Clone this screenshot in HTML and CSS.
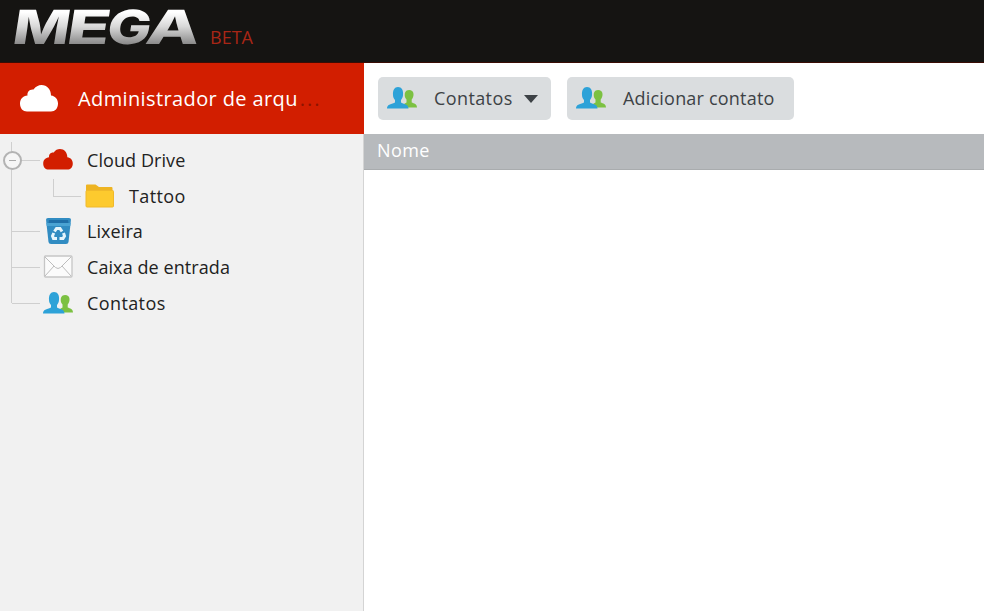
FILE: index.html
```
<!DOCTYPE html>
<html lang="pt">
<head>
    <meta charset="UTF-8">
    <title>MEGA</title>
    <link rel="stylesheet" href="styles.css">
</head>
<body>

<!-- shared icons -->
<svg class="defs" width="0" height="0">
    <symbol id="cloud" viewBox="0 0 38 27">
        <path d="M7 26.500C3 26.500 0 23.500 0 18.500C0 14 3 11 7.500 10.500C7 7 9.500 4 13.500 4.500C15.500 1.500 18.500 0 21.500 0C27 0 31 4.500 31 10.500C35.500 11 38 14.500 38 18.500C38 23.500 35 26.500 31 26.500Z"/>
    </symbol>
    <symbol id="people" viewBox="0 0 30 22">
        <path fill="#7cc142" d="M17 20.500V17L19.500 15.500V12.500C18 11 17.500 9 17.800 6.500C18.200 4 20 3 22.200 3C24.500 3 26.200 4.200 26.500 6.800C26.700 9 26 11 24.700 12.500V15.500C27 16.500 30 16.500 30 20.500Z"/>
        <path fill="#2da2d8" d="M0 21.500C0 17.500 3.500 17.500 8 15.500V13C6.500 11.500 6 9.500 6 8C5.700 3 7.500 0 11 0C14.700 0 16.500 3 16 8C16 9.500 15.300 11.500 14 13V15.500C18 17.500 21.500 17.500 21.500 21.500Z"/>
    </symbol>
</svg>

<header id="top">
    <svg class="logo" width="190" height="50">
        <defs>
            <linearGradient id="silver" x1="0" y1="0" x2="0" y2="1">
                <stop offset="0.25" stop-color="#ffffff"/>
                <stop offset="0.5" stop-color="#d8d8d8"/>
                <stop offset="0.8" stop-color="#8c8c8c"/>
            </linearGradient>
        </defs>
        <text transform="translate(0 44) skewX(-9)" fill="url(#silver)">
            <tspan x="-3" textLength="57" lengthAdjust="spacingAndGlyphs">M</tspan><tspan x="51" textLength="43" lengthAdjust="spacingAndGlyphs">E</tspan><tspan x="91" textLength="44" lengthAdjust="spacingAndGlyphs">G</tspan><tspan x="130" textLength="54" lengthAdjust="spacingAndGlyphs">A</tspan>
        </text>
    </svg>
    <span class="beta">BETA</span>
</header>

<div id="main">
    <aside id="left">
        <div class="title">
            <svg width="38" height="27" fill="#fff"><use href="#cloud"/></svg>
            <h1>Administrador de arqu<span>...</span></h1>
        </div>
        <ul class="tree">
            <li class="root">
                <i class="toggle"></i>
                <svg class="icon" width="30" height="21" fill="#d21e00"><use href="#cloud"/></svg>
                <span>Cloud Drive</span>
            </li>
            <li class="sub">
                <svg class="icon" width="30" height="24" viewBox="0 0 30 24">
                    <path fill="#eeb422" d="M1 7V1.500Q1 .5 2 .5H10.500L14 3H26.500Q27.500 3 27.500 4V7Z"/>
                    <rect x="1" y="6.500" width="27.500" height="16.500" rx="1" fill="#fdca2e" stroke="#f0b92b"/>
                </svg>
                <span class="wide">Tattoo</span>
            </li>
            <li class="branch">
                <svg class="icon" width="30" height="26" viewBox="0 0 30 26">
                    <path fill="#318cc2" d="M3 1.500Q3 0 5 0H26Q28 0 28 1.500L25.500 24Q25.200 26 23 26H8Q5.800 26 5.500 24Z"/>
                    <path fill="#1f6fa8" d="M6 2H25L25.500 5H5.500Z"/>
                    <path fill="#4aa3d3" d="M3.300 5H27.700L27.300 8H3.700Z"/>
                    <g fill="none" stroke="#e6f5fc" stroke-width="3">
                        <path d="M11.500 13.500L13.500 10.500H17L19 13.500"/>
                        <path d="M20.500 15L21.500 18L20 20.500H16.500"/>
                        <path d="M14 20.500H10.500L9.500 18L10.800 15"/>
                    </g>
                </svg>
                <span>Lixeira</span>
            </li>
            <li class="branch">
                <svg class="icon" width="30" height="23" viewBox="0 0 30 23">
                    <rect x="1.500" y="1" width="27.500" height="21" rx="1" fill="#fbfbfb" stroke="#c6c6c6" stroke-width="1.300"/>
                    <path fill="none" stroke="#bdbdbd" d="M2 2L12.500 12.500Q15 14.500 17.500 12.500L28 2M2 21L11 11M28 21L19 11"/>
                </svg>
                <span>Caixa de entrada</span>
            </li>
            <li class="branch last">
                <svg class="icon" width="30" height="22"><use href="#people"/></svg>
                <span class="wide">Contatos</span>
            </li>
        </ul>
    </aside>

    <section id="right">
        <div class="toolbar">
            <button class="contacts">
                <svg width="30" height="22"><use href="#people"/></svg>
                <span class="wide">Contatos</span>
                <svg class="arrow" width="14" height="8" viewBox="0 0 14 8"><path fill="#3d4246" d="M0 0H14L7 8Z"/></svg>
            </button>
            <button class="add">
                <svg width="30" height="22"><use href="#people"/></svg>
                <span>Adicionar contato</span>
            </button>
        </div>
        <div class="columns">Nome</div>
    </section>
</div>

</body>
</html>
```

FILE: styles.css
```
* {
    box-sizing: border-box;
}

body {
    margin: 0;
    height: 611px;
    display: flex;
    flex-direction: column;
    overflow: hidden;
    background-color: #fff;
    font-family: "Open Sans", sans-serif;
    font-size: 18px;
    color: #222;
}

svg {
    display: block;
    flex: none;
}

.defs {
    position: absolute;
}

#top {
    height: 63px;
    flex: none;
    display: flex;
    padding-left: 14px;
    background-color: #151412;
    border-bottom: 1px solid #3a0c04;
}

.logo {
    overflow: visible;
}

.logo text {
    font-family: Inter, sans-serif;
    font-weight: 800;
    font-size: 47px;
}

.beta {
    margin: 25px 0 0 6px;
    font-size: 18px;
    font-weight: 500;
    line-height: 25px;
    color: #a82616;
}

#main {
    flex: 1;
    display: flex;
}

#left {
    width: 364px;
    flex: none;
    background-color: #f1f1f1;
    border-right: 1px solid #d4d4d4;
}

.title {
    height: 71px;
    margin-right: -1px;
    padding-left: 20px;
    display: flex;
    align-items: center;
    gap: 20px;
    background-color: #d21e00;
    color: #fff;
}

.title h1 {
    margin: 0;
    padding-bottom: 1px;
    font-size: 20px;
    font-weight: normal;
    letter-spacing: 0.38px;
    white-space: nowrap;
}

.title h1 span {
    margin-left: 2px;
    color: #8c1400;
    letter-spacing: 2px;
}

.tree {
    list-style: none;
    margin: 0;
    padding: 8px 0 0;
}

.tree li {
    position: relative;
    height: 35.700px;
    padding-left: 43px;
    display: flex;
    align-items: center;
    gap: 14px;
    letter-spacing: 0.08px;
}

.tree .sub {
    padding-left: 85px;
}

.wide {
    letter-spacing: 0.4px;
}

/* connector lines */
.tree li::before {
    content: "";
    position: absolute;
    left: 11px;
    top: 0;
    height: 100%;
    border-left: 1px solid #cfcfcf;
}

.tree .last::before {
    height: 50%;
}

.tree li::after {
    content: "";
    position: absolute;
    left: 12px;
    top: 50%;
    width: 28px;
    border-top: 1px solid #cfcfcf;
}

.tree .sub::after {
    left: 53px;
    top: 1px;
    width: 27px;
    height: 17px;
    border-top: 0;
    border-left: 1px solid #cfcfcf;
    border-bottom: 1px solid #cfcfcf;
}

.toggle {
    position: absolute;
    z-index: 1;
    left: 3px;
    top: 9px;
    width: 19px;
    height: 19px;
    border: 2px solid #b3b3b3;
    border-radius: 50%;
    background: linear-gradient(#aaa, #aaa) center / 7px 1px no-repeat #f6f6f6;
}

#right {
    flex: 1;
}

.toolbar {
    height: 71px;
    display: flex;
    align-items: center;
    gap: 16px;
    padding-left: 14px;
}

.toolbar button {
    height: 43px;
    padding: 0 0 2px 9px;
    display: flex;
    align-items: center;
    border: 0;
    border-radius: 5px;
    background-color: #dadddf;
    font: 18px "Open Sans", sans-serif;
    color: #3d4246;
}

.toolbar .contacts {
    width: 173px;
}

.toolbar .add {
    width: 227px;
    letter-spacing: 0.2px;
}

.toolbar button span {
    margin-left: 17px;
    white-space: nowrap;
}

.arrow {
    margin: 2px 0 0 11px;
}

.columns {
    height: 36px;
    padding-left: 13px;
    line-height: 33px;
    letter-spacing: 0.4px;
    background-color: #b7babd;
    border-bottom: 1px solid #a9acae;
    color: #fff;
}
```
